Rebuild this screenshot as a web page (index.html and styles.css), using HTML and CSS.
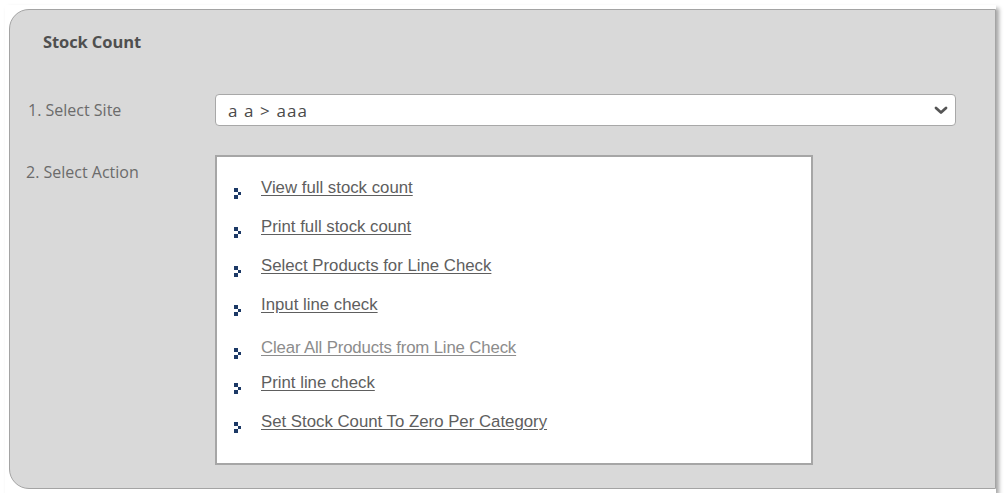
FILE: index.html
```html
<!DOCTYPE html>
<html>
<head>
<meta charset="utf-8">
<title>Stock Count</title>
<link rel="stylesheet" href="styles.css">
</head>
<body>
<div class="window">
  <div class="panel">
    <h1 class="title">Stock Count</h1>
    <div class="row row-site">
      <label class="label">1. Select Site</label>
      <div class="select">
        <span class="select-value">a a &gt; aaa</span>
        <svg class="chevron" width="14" height="9" viewBox="0 0 14 9"><path d="M2 2 L7 6.5 L12 2" fill="none" stroke="#555" stroke-width="2.8" stroke-linecap="round" stroke-linejoin="round"/></svg>
      </div>
    </div>
    <div class="row row-action">
      <label class="label">2. Select Action</label>
      <div class="actions">
        <ul class="action-list">
          <li class="action"><svg class="bullet" width="8" height="11" viewBox="0 0 8 11"><rect x="0" y="0" width="4" height="4"/><rect x="4" y="4" width="3" height="3"/><rect x="0" y="7" width="4" height="4"/></svg><a href="#">View full stock count</a></li>
          <li class="action"><svg class="bullet" width="8" height="11" viewBox="0 0 8 11"><rect x="0" y="0" width="4" height="4"/><rect x="4" y="4" width="3" height="3"/><rect x="0" y="7" width="4" height="4"/></svg><a href="#">Print full stock count</a></li>
          <li class="action"><svg class="bullet" width="8" height="11" viewBox="0 0 8 11"><rect x="0" y="0" width="4" height="4"/><rect x="4" y="4" width="3" height="3"/><rect x="0" y="7" width="4" height="4"/></svg><a href="#">Select Products for Line Check</a></li>
          <li class="action"><svg class="bullet" width="8" height="11" viewBox="0 0 8 11"><rect x="0" y="0" width="4" height="4"/><rect x="4" y="4" width="3" height="3"/><rect x="0" y="7" width="4" height="4"/></svg><a href="#">Input line check</a></li>
          <li class="action action-shift"><svg class="bullet" width="8" height="11" viewBox="0 0 8 11"><rect x="0" y="0" width="4" height="4"/><rect x="4" y="4" width="3" height="3"/><rect x="0" y="7" width="4" height="4"/></svg><a href="#" class="muted">Clear All Products from Line Check</a></li>
          <li class="action"><svg class="bullet" width="8" height="11" viewBox="0 0 8 11"><rect x="0" y="0" width="4" height="4"/><rect x="4" y="4" width="3" height="3"/><rect x="0" y="7" width="4" height="4"/></svg><a href="#">Print line check</a></li>
          <li class="action"><svg class="bullet" width="8" height="11" viewBox="0 0 8 11"><rect x="0" y="0" width="4" height="4"/><rect x="4" y="4" width="3" height="3"/><rect x="0" y="7" width="4" height="4"/></svg><a href="#">Set Stock Count To Zero Per Category</a></li>
        </ul>
      </div>
    </div>
  </div>
</div>
</body>
</html>
```
FILE: styles.css
```css
* { box-sizing: border-box; }
html, body { margin: 0; padding: 0; background: #fff; }
body { padding: 5px 0 0 5px; font-family: "Open Sans", "Noto Sans", sans-serif; }

.window {
  width: 991px;
  height: 488px;
  background: #fff;
  padding: 4px 0 4px 4px;
  box-shadow: 3px 3px 4px rgba(0, 0, 0, 0.35);
}

.panel {
  width: 987px;
  height: 480px;
  background: #d9d9d9;
  border: 1px solid #a4a4a4;
  border-radius: 20px 0 0 20px;
  padding: 0 0 0 18px;
}

.title {
  margin: 22px 0 0 15px;
  font-size: 16.5px;
  font-weight: 700;
  color: #4f4f4f;
  line-height: 20px;
  letter-spacing: -0.1px;
}

.row { display: flex; }
.row-site { margin-top: 42px; align-items: center; }
.row-action { margin-top: 29px; }

.label {
  width: 187px;
  flex: none;
  font-size: 16px;
  line-height: 22px;
  color: #6b6b6b;
  letter-spacing: 0;
}
.row-action .label { margin-left: -2px; width: 189px; padding-top: 6px; }

.select {
  width: 741px;
  height: 32px;
  background: #fff;
  border: 1px solid #a8a8a8;
  border-radius: 4px;
  display: flex;
  align-items: center;
  justify-content: space-between;
  padding: 0 7px 0 12px;
}
.select-value { font-size: 17px; color: #4a4a4a; letter-spacing: 1.1px; }
.chevron { display: block; }

.actions {
  width: 598px;
  height: 310px;
  background: #fff;
  border: 2px solid #a6a6a6;
}

.action-list {
  list-style: none;
  margin: 0;
  padding: 20px 0 0 17px;
}

.action {
  display: flex;
  align-items: flex-start;
  height: 39px;
}
.action-shift { margin-top: 4px; margin-bottom: -4px; }

.bullet {
  display: block;
  fill: #1c3966;
  flex: none;
  margin-top: 11px;
  margin-right: 19px;
  shape-rendering: crispEdges;
}

.action a {
  font-family: "Liberation Sans", Arial, sans-serif;
  font-size: 16.8px;
  line-height: 21px;
  color: #5e5e5e;
  text-decoration: underline;
  text-underline-offset: 2px;
}
.action a.muted { color: #8c8c8c; letter-spacing: -0.15px; }
```
